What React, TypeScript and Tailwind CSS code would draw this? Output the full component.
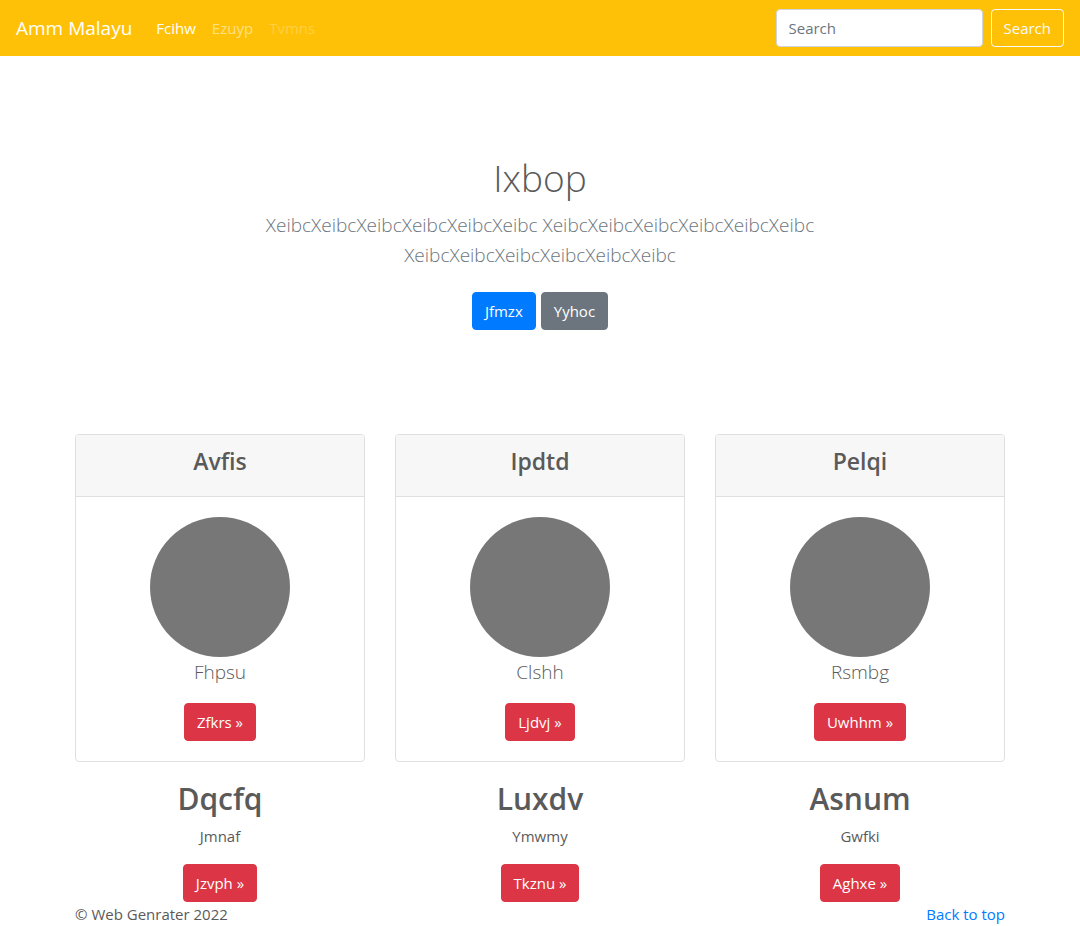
import React from "react";

const features = [
  { title: "Avfis", text: "Fhpsu", action: "Zfkrs" },
  { title: "Ipdtd", text: "Clshh", action: "Ljdvj" },
  { title: "Pelqi", text: "Rsmbg", action: "Uwhhm" },
];

const topics = [
  { title: "Dqcfq", text: "Jmnaf", action: "Jzvph" },
  { title: "Luxdv", text: "Ymwmy", action: "Tkznu" },
  { title: "Asnum", text: "Gwfki", action: "Aghxe" },
];

const button = "inline-block rounded border px-3 py-1.5 text-[15px] leading-6";
const red = "border-[#dc3545] bg-[#dc3545] text-white";

export default function App() {
  return (
    <div className="bg-white font-['Open_Sans','Noto_Sans',sans-serif] text-[15px] leading-6 text-[#5a5a5a]">
      <nav className="flex h-14 items-center bg-[#ffc107] px-4">
        <a href="#" className="mr-4 text-[19px] leading-8 text-white">Amm Malayu</a>
        <div className="flex flex-1">
          <a href="#" className="p-2 text-white">Fcihw</a>
          <a href="#" className="p-2 text-white/50">Ezuyp</a>
          <a href="#" aria-disabled="true" className="p-2 text-white/25">Tvmns</a>
        </div>
        <form className="flex gap-2" onSubmit={(e) => e.preventDefault()}>
          <input
            type="search"
            aria-label="Search"
            placeholder="Search"
            className="h-[38px] w-[207px] rounded border border-[#ced4da] bg-white px-3 py-1.5 placeholder:text-[#6c757d]"
          />
          <button type="submit" className={`${button} border-[#f8f9fa] text-[#f8f9fa]`}>Search</button>
        </form>
      </nav>

      <main>
        <section className="mx-auto max-w-[640px] px-4 pt-[98px] pb-24 text-center">
          <h1 className="mb-2 text-[37px] leading-12 font-light">Ixbop</h1>
          <p className="mb-[22px] text-[19px] leading-[30px] font-light text-[#6c757d]">
            XeibcXeibcXeibcXeibcXeibcXeibc XeibcXeibcXeibcXeibcXeibcXeibc XeibcXeibcXeibcXeibcXeibcXeibc
          </p>
          <p className="mb-2 flex justify-center gap-[5px]">
            <a href="#" className={`${button} border-[#007bff] bg-[#007bff] text-white`}>Jfmzx</a>
            <a href="#" className={`${button} border-[#6c757d] bg-[#6c757d] text-white`}>Yyhoc</a>
          </p>
        </section>

        <div className="mx-auto max-w-[960px] px-[15px] text-center">
          <div className="mb-4 grid grid-cols-3 gap-[30px]">
            {features.map((item) => (
              <section key={item.title} className="overflow-hidden rounded border border-[#dfdfdf]">
                <header className="border-b border-[#dfdfdf] bg-[#f7f7f7] px-5 pt-3 pb-5">
                  <h4 className="text-[23px] leading-[29px] font-semibold">{item.title}</h4>
                </header>
                <div className="p-5">
                  <svg viewBox="0 0 140 140" className="mx-auto size-[140px]" aria-hidden="true">
                    <circle cx="70" cy="70" r="70" fill="#777" />
                  </svg>
                  <p className="mb-4 text-[19px] leading-[30px] font-light">{item.text}</p>
                  <a href="#" className={`${button} ${red}`}>{item.action} »</a>
                </div>
              </section>
            ))}
          </div>
          <div className="grid grid-cols-3 gap-[30px]">
            {topics.map((item) => (
              <section key={item.title}>
                <h2 className="mb-1 text-[30px] leading-[42px] font-semibold">{item.title}</h2>
                <p className="mb-4">{item.text}</p>
                <a href="#" className={`${button} ${red}`}>{item.action} »</a>
              </section>
            ))}
          </div>
        </div>
      </main>

      <footer className="mx-auto flex max-w-[960px] justify-between px-[15px]">
        <p>© Web Genrater 2022</p>
        <a href="#" className="text-[#007bff]">Back to top</a>
      </footer>
    </div>
  );
}
